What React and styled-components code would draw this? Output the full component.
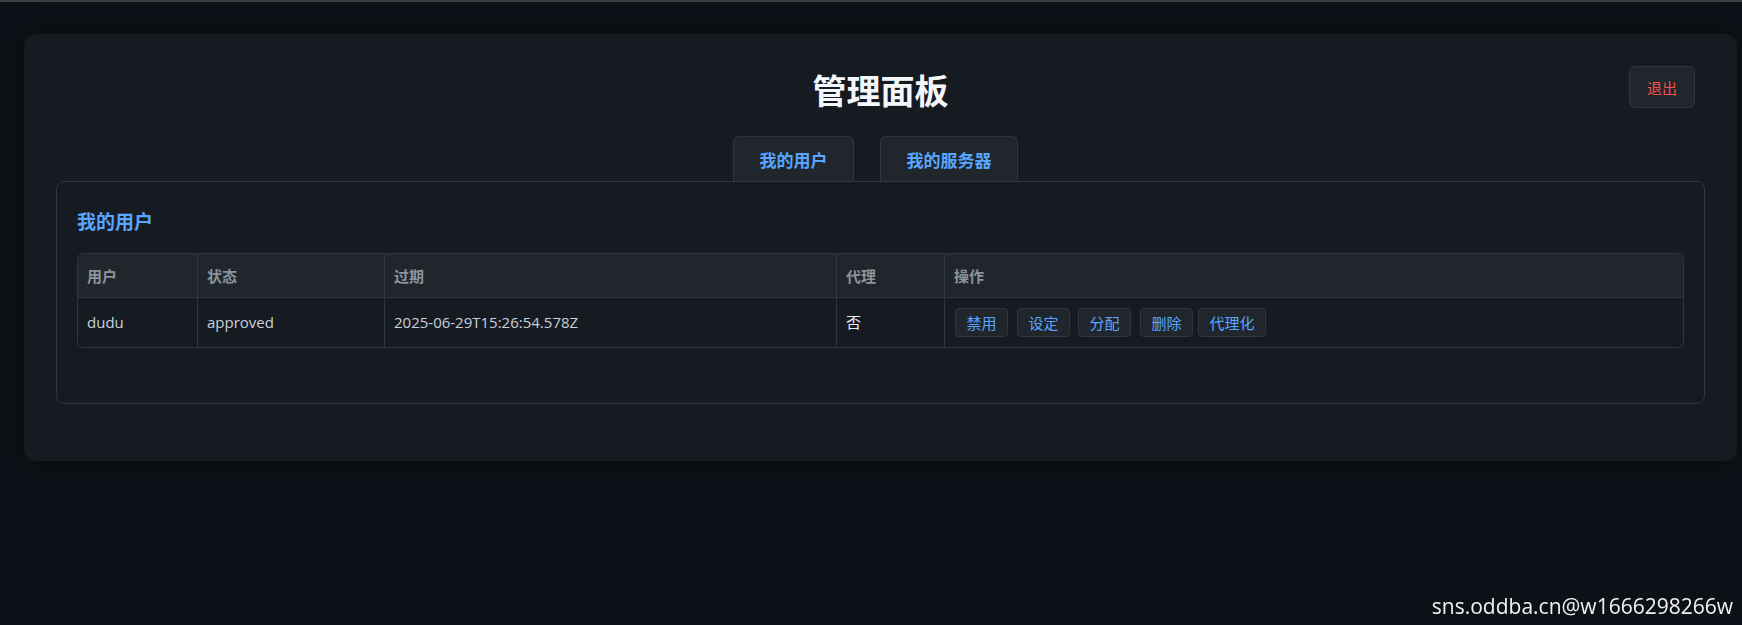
import React from 'react';
import styled, { createGlobalStyle } from 'styled-components';

const GlobalStyle = createGlobalStyle`
html, body {
  margin: 0;
  padding: 0;
  background: #0d1117;
}
body {
  border-top: 2px solid #3b3c3f;
  font-family: "Open Sans", "Noto Sans CJK SC", sans-serif;
  color: #c9d1d9;
  min-height: 100vh;
  box-sizing: border-box;
}
`

const Page = styled.div`
padding: 32px 5px 0 24px;
`

const Card = styled.div`
background: #161b22;
border-radius: 12px;
padding: 32px 32px 33px 32px;
box-shadow: 0 0 24px rgba(0, 0, 0, 0.35);
`

const Header = styled.div`
display: grid;
grid-template-columns: 1fr auto 1fr;
align-items: start;
`

const Title = styled.h1`
grid-column: 2;
margin: 0;
font-family: "Noto Sans CJK SC", sans-serif;
font-size: 34px;
line-height: 48px;
font-weight: 700;
color: #f5f8fb;
`

const LogoutButton = styled.button`
grid-column: 3;
justify-self: end;
margin-right: 10px;
height: 42px;
padding: 0 17px;
background: #21262d;
border: 1px solid #30363d;
border-radius: 6px;
color: #f85149;
font-family: "Noto Sans CJK SC", sans-serif;
font-size: 15px;
cursor: pointer;
`

const TabRow = styled.div`
display: flex;
justify-content: center;
gap: 16px;
margin-top: 22px;
`

const Tab = styled.button`
box-sizing: border-box;
height: 45px;
margin-right: 10px;
padding: 0 25.5px;
background: #21262d;
border: 1px solid #30363d;
border-bottom: none;
border-radius: 6px 6px 0 0;
color: #58a6ff;
font-family: "Noto Sans CJK SC", sans-serif;
font-size: 17px;
font-weight: 600;
cursor: pointer;
`

const Panel = styled.div`
border: 1px solid #30363d;
border-radius: 8px;
padding: 20px;
margin-bottom: 24px;
`

const SectionTitle = styled.h3`
margin: 6px 0 19px;
font-family: "Noto Sans CJK SC", sans-serif;
font-size: 19px;
line-height: 26px;
font-weight: 700;
color: #58a6ff;
`

const Table = styled.table`
width: 100%;
table-layout: fixed;
border-collapse: separate;
border-spacing: 0;
border: 1px solid #30363d;
border-radius: 6px;
overflow: hidden;
margin-bottom: 35px;
font-size: 15px;
`

const Th = styled.th`
text-align: left;
padding: 10px 9px;
line-height: 23px;
background: #21262d;
color: #8b949e;
font-family: "Noto Sans CJK SC", sans-serif;
font-weight: 700;
border-bottom: 1px solid #30363d;
border-right: ${props => props.$last ? 'none' : '1px solid #30363d'};
`

const Td = styled.td`
padding: 10px 9px;
line-height: 29px;
background: #161b22;
color: ${props => props.$bright ? '#e6edf3' : '#c9d1d9'};
border-right: ${props => props.$last ? 'none' : '1px solid #30363d'};
white-space: nowrap;
`

const Actions = styled.div`
display: flex;
align-items: center;
padding-left: 1px;
`

const ActionButton = styled.button`
box-sizing: border-box;
height: 29px;
padding: 0 10.5px;
margin-right: ${props => props.$gap}px;
background: #21262d;
border: 1px solid #30363d;
border-radius: 4px;
color: #58a6ff;
font-family: "Noto Sans CJK SC", sans-serif;
font-size: 15px;
line-height: 27px;
cursor: pointer;
`

const Watermark = styled.div`
position: fixed;
right: 9px;
bottom: 6px;
font-family: "Open Sans", sans-serif;
font-size: 21px;
line-height: 25px;
color: #f2f2f2;
pointer-events: none;
`

const users = [
    { name: 'dudu', status: 'approved', expire: '2025-06-29T15:26:54.578Z', proxy: '否' }
]

const actions = [
    { label: '禁用', gap: 9 },
    { label: '设定', gap: 8 },
    { label: '分配', gap: 9 },
    { label: '删除', gap: 5 },
    { label: '代理化', gap: 0 },
]

function App() {
    return (
        <Page>
            <GlobalStyle />
            <Card>
                <Header>
                    <Title>管理面板</Title>
                    <LogoutButton>退出</LogoutButton>
                </Header>
                <TabRow>
                    <Tab>我的用户</Tab>
                    <Tab>我的服务器</Tab>
                </TabRow>
                <Panel>
                    <SectionTitle>我的用户</SectionTitle>
                    <Table>
                        <colgroup>
                            <col style={{ width: 120 }} />
                            <col style={{ width: 187 }} />
                            <col style={{ width: 452 }} />
                            <col style={{ width: 108 }} />
                            <col />
                        </colgroup>
                        <thead>
                            <tr>
                                <Th>用户</Th>
                                <Th>状态</Th>
                                <Th>过期</Th>
                                <Th>代理</Th>
                                <Th $last>操作</Th>
                            </tr>
                        </thead>
                        <tbody>
                            {users.map((u) => (
                                <tr key={u.name}>
                                    <Td>{u.name}</Td>
                                    <Td>{u.status}</Td>
                                    <Td>{u.expire}</Td>
                                    <Td $bright>{u.proxy}</Td>
                                    <Td $last>
                                        <Actions>
                                            {actions.map((a) => (
                                                <ActionButton key={a.label} $gap={a.gap}>{a.label}</ActionButton>
                                            ))}
                                        </Actions>
                                    </Td>
                                </tr>
                            ))}
                        </tbody>
                    </Table>
                </Panel>
            </Card>
            <Watermark>sns.oddba.cn@w1666298266w</Watermark>
        </Page>
    )
}

export default App;
